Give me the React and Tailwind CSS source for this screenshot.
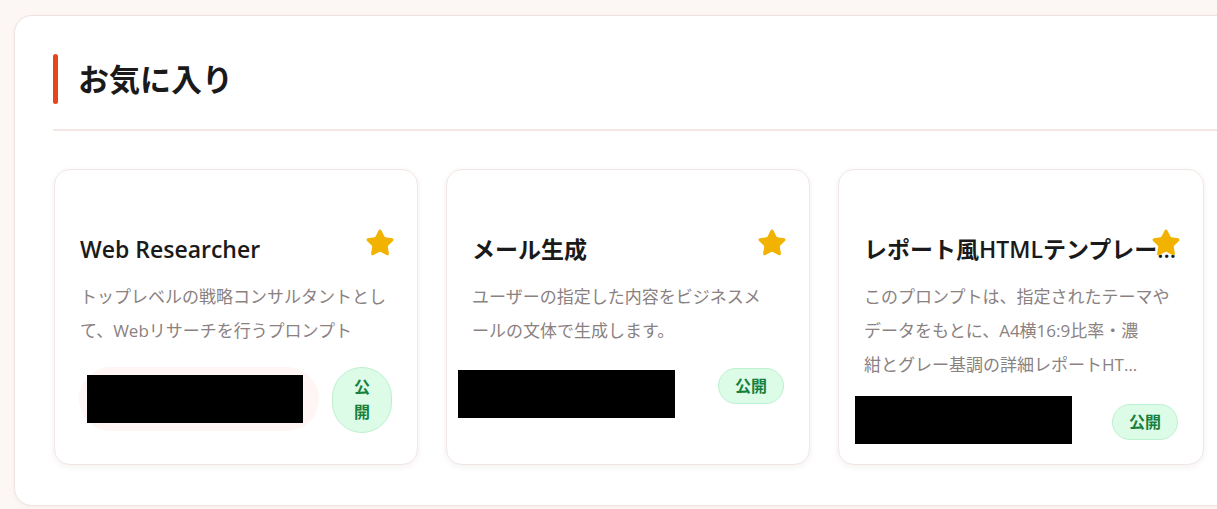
import { Star } from "lucide-react";

const font = { fontFamily: '"Open Sans", "Noto Sans CJK JP", sans-serif' };

function Badge({ stacked }) {
  return (
    <span
      className={`shrink-0 rounded-full border border-[#bdf0cf] bg-[#dcfce7] text-[16px] font-bold text-[#17803d] flex items-center justify-center ${
        stacked ? "w-[60px] h-[66px] flex-col leading-[25px]" : "w-[66px] h-[36px] leading-none"
      }`}
    >
      {stacked ? (
        <>
          <span>公</span>
          <span>開</span>
        </>
      ) : (
        "公開"
      )}
    </span>
  );
}

function Card({ title, lines, footer }) {
  return (
    <div className="relative flex flex-col rounded-[16px] border border-[#f2e6e4] bg-white pt-[63px] px-[25px] pb-[20px] shadow-[0_2px_6px_rgba(120,80,70,0.08)]">
      <Star
        className="absolute right-[22px] top-[58px] text-[#f2b200]"
        size={30}
        fill="#f2b200"
        strokeWidth={1.5}
      />
      <h3 className="truncate text-[23px] font-semibold leading-[32px] text-[#1a1a1a]">
        {title}
      </h3>
      <p className="mt-[15px] text-[17px] leading-[34px] text-[#8a8181]">
        {lines.map((l, i) => (
          <span key={i} className="block whitespace-nowrap">
            {l}
          </span>
        ))}
      </p>
      {footer}
    </div>
  );
}

export default function App() {
  return (
    <div
      className="h-screen overflow-hidden bg-[#fcf7f5] pl-[14px] pt-[15px]"
      style={font}
    >
      <div className="w-[1260px] rounded-[18px] border-[1.5px] border-[#f0e2df] bg-white pl-[38px] pt-[38px] pb-[40px] shadow-[0_1px_4px_rgba(120,80,70,0.06)]">
        {/* Heading */}
        <div className="flex items-center gap-[20px]">
          <span className="h-[50px] w-[5px] rounded-full bg-[#e8461a]" />
          <h2 className="text-[31px] font-bold leading-none text-[#1a1a1a]">
            お気に入り
          </h2>
        </div>
        <div className="mt-[25px] h-[2px] bg-[#f3e6e4]" />

        {/* Cards */}
        <div className="mt-[38px] grid grid-cols-[364px_364px_366px] gap-[28px] pl-[1px]">
          <Card
            title="Web Researcher"
            lines={["トップレベルの戦略コンサルタントとし", "て、Webリサーチを行うプロンプト"]}
            footer={
              <div className="mt-[19px] flex items-start justify-between">
                <div className="-ml-[1px] h-[64px] w-[240px] rounded-full bg-[#fef5f4] pl-[8px] pt-[8px]">
                  <div className="h-[48px] w-[216px] bg-black" />
                </div>
                <Badge stacked />
              </div>
            }
          />
          <Card
            title="メール生成"
            lines={["ユーザーの指定した内容をビジネスメ", "ールの文体で生成します。"]}
            footer={
              <div className="mt-[20px] flex items-start justify-between">
                <div className="-ml-[14px] mt-[2px] h-[48px] w-[217px] bg-black" />
                <Badge />
              </div>
            }
          />
          <Card
            title="レポート風HTMLテンプレート生成"
            lines={[
              "このプロンプトは、指定されたテーマや",
              "データをもとに、A4横16:9比率・濃",
              "紺とグレー基調の詳細レポートHT…",
            ]}
            footer={
              <div className="mt-[14px] flex items-start justify-between">
                <div className="-ml-[9px] h-[48px] w-[217px] bg-black" />
                <span className="mt-[8px]">
                  <Badge />
                </span>
              </div>
            }
          />
        </div>
      </div>
    </div>
  );
}
